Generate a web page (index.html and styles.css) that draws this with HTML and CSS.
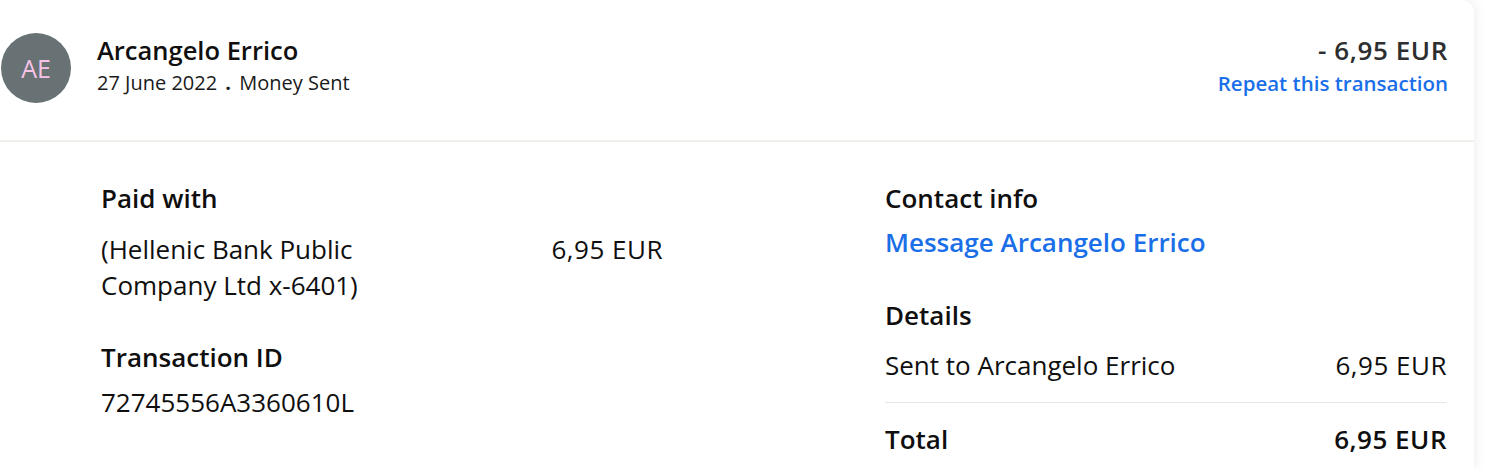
FILE: index.html
```html
<!DOCTYPE html>
<html lang="en">
<head>
<meta charset="utf-8">
<title>Transaction details</title>
<link rel="stylesheet" href="styles.css">
</head>
<body>
<div class="card">
  <header class="card-header">
    <div class="avatar">AE</div>
    <div class="who">
      <div class="name">Arcangelo Errico</div>
      <div class="meta">27 June 2022 <span class="dot">.</span> Money Sent</div>
    </div>
    <div class="summary">
      <div class="amount">- 6,95 EUR</div>
      <a class="repeat" href="#">Repeat this transaction</a>
    </div>
  </header>
  <div class="card-body">
    <div class="col">
      <h3 class="heading">Paid with</h3>
      <div class="paid-row">
        <div class="paid-source">(Hellenic Bank Public Company Ltd x-6401)</div>
        <div class="money">6,95 EUR</div>
      </div>
      <h3 class="heading tx-heading">Transaction ID</h3>
      <div class="tx-id">72745556A3360610L</div>
    </div>
    <div class="col">
      <h3 class="heading">Contact info</h3>
      <a class="message" href="#">Message Arcangelo Errico</a>
      <h3 class="heading details-heading">Details</h3>
      <div class="detail-row">
        <span>Sent to Arcangelo Errico</span>
        <span class="money">6,95 EUR</span>
      </div>
      <div class="total-row">
        <span>Total</span>
        <span class="money">6,95 EUR</span>
      </div>
    </div>
  </div>
</div>
</body>
</html>
```

FILE: styles.css
```css
html, body {
  margin: 0;
  padding: 0;
  background: #ffffff;
}
body {
  font-family: "Open Sans", "Noto Sans", sans-serif;
  color: #0f0f0f;
  overflow: hidden;
}
.card {
  width: 1474px;
  height: 469px;
  background: #ffffff;
  border-top-right-radius: 12px;
  box-shadow: 0 0 14px rgba(0, 0, 0, 0.09);
  overflow: hidden;
}
.card-header {
  display: flex;
  align-items: flex-start;
  height: 142px;
  box-sizing: border-box;
  padding: 33px 26px 0 1px;
  border-bottom: 2px solid #efeee9;
}
.avatar {
  width: 70px;
  height: 70px;
  border-radius: 50%;
  background: #687173;
  color: #f7c4e8;
  font-size: 25px;
  display: flex;
  align-items: center;
  justify-content: center;
  flex: none;
}
.who {
  margin-left: 26px;
  padding-top: 2px;
  flex: 1;
}
.name {
  font-size: 25.5px;
  font-weight: 600;
  line-height: 30px;
}
.meta {
  font-size: 20px;
  line-height: 26px;
  margin-top: 5px;
  color: #1a1a1a;
}
.dot {
  margin: 0 3px;
  font-weight: 700;
}
.summary {
  padding-top: 2px;
  display: flex;
  flex-direction: column;
  align-items: flex-end;
}
.amount {
  font-size: 26px;
  font-weight: 600;
  line-height: 30px;
  letter-spacing: 0.6px;
  color: #2c2e2f;
}
.repeat {
  font-size: 20.5px;
  font-weight: 600;
  line-height: 26px;
  margin-top: 5px;
  color: #1a6fe8;
  text-decoration: none;
}
.card-body {
  display: grid;
  grid-template-columns: 562px 562px;
  column-gap: 222px;
  padding: 40px 27px 0 101px;
}
.col {
  display: flex;
  flex-direction: column;
}
.heading {
  margin: 0;
  font-size: 26px;
  font-weight: 600;
  line-height: 32px;
}
.money {
  letter-spacing: 0.5px;
}
.paid-row {
  display: flex;
  justify-content: space-between;
  margin-top: 16.5px;
  font-size: 26px;
  line-height: 36px;
}
.paid-source {
  flex: 0 1 300px;
}
.tx-heading {
  margin-top: 38px;
}
.tx-id {
  margin-top: 11px;
  font-size: 26px;
  line-height: 36px;
}
.message {
  margin-top: 12px;
  font-size: 26px;
  font-weight: 600;
  line-height: 32px;
  color: #1a6fe8;
  text-decoration: none;
}
.details-heading {
  margin-top: 41px;
}
.detail-row {
  display: flex;
  justify-content: space-between;
  margin-top: 16px;
  padding-bottom: 19px;
  border-bottom: 1px solid #e6e6e6;
  font-size: 26px;
  line-height: 36px;
}
.total-row {
  display: flex;
  justify-content: space-between;
  margin-top: 20px;
  font-size: 26px;
  font-weight: 600;
  line-height: 32px;
}
```
